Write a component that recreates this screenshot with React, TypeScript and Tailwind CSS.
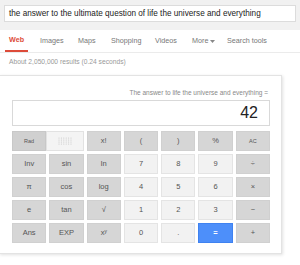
import React from 'react';

type Key = { label: string; kind: 'fn' | 'num' | 'eq'; small?: boolean };

const rows: Key[][] = [
  [
    { label: 'x!', kind: 'fn' },
    { label: '(', kind: 'fn' },
    { label: ')', kind: 'fn' },
    { label: '%', kind: 'fn' },
    { label: 'AC', kind: 'fn', small: true },
  ],
  [
    { label: 'Inv', kind: 'fn' },
    { label: 'sin', kind: 'fn' },
    { label: 'ln', kind: 'fn' },
    { label: '7', kind: 'num' },
    { label: '8', kind: 'num' },
    { label: '9', kind: 'num' },
    { label: '÷', kind: 'fn' },
  ],
  [
    { label: 'π', kind: 'fn' },
    { label: 'cos', kind: 'fn' },
    { label: 'log', kind: 'fn' },
    { label: '4', kind: 'num' },
    { label: '5', kind: 'num' },
    { label: '6', kind: 'num' },
    { label: '×', kind: 'fn' },
  ],
  [
    { label: 'e', kind: 'fn' },
    { label: 'tan', kind: 'fn' },
    { label: '√', kind: 'fn' },
    { label: '1', kind: 'num' },
    { label: '2', kind: 'num' },
    { label: '3', kind: 'num' },
    { label: '−', kind: 'fn' },
  ],
  [
    { label: 'Ans', kind: 'fn' },
    { label: 'EXP', kind: 'fn' },
    { label: 'xʸ', kind: 'fn' },
    { label: '0', kind: 'num' },
    { label: '.', kind: 'num' },
    { label: '=', kind: 'eq' },
    { label: '+', kind: 'fn' },
  ],
];

const keyStyle = {
  fn: 'bg-[#d6d6d6] border-[#d0d0d0] text-[#555]',
  num: 'bg-[#f2f2f2] border-[#e4e4e4] text-[#555]',
  eq: 'bg-[#4d8ffa] border-[#3f82f0] text-white font-bold',
};

// the little dotted grip on the Rad/Deg toggle
const Dots: React.FC = () => (
  <svg width="14" height="8" viewBox="0 0 14 8">
    {[0, 1, 2, 3].map(r =>
      [0, 1, 2, 3, 4, 5].map(c => (
        <circle key={`${r}-${c}`} cx={c * 2.4 + 1} cy={r * 2 + 1} r="0.6" fill="#c8c8c8" />
      ))
    )}
  </svg>
);

const CalcKey: React.FC<{ k: Key }> = ({ k }) => (
  <div
    className={`h-[20px] border flex items-center justify-center ${keyStyle[k.kind]} ${
      k.small ? 'text-[5.5px]' : 'text-[7.5px]'
    }`}
  >
    {k.label}
  </div>
);

const tabs = [
  { name: 'Images', w: 'w-[38px]' },
  { name: 'Maps', w: 'w-[33px]' },
  { name: 'Shopping', w: 'w-[44px]' },
  { name: 'Videos', w: 'w-[37px]' },
];

export default function App() {
  return (
    <div className="w-[300px] h-[265px] bg-white overflow-hidden font-['Liberation_Sans',Arial,sans-serif]">
      {/* search bar */}
      <div className="bg-[#f1f1f1] h-[30px] pt-[5px] px-[4px]">
        <div className="bg-white h-[17px] border border-[#dcdcdc] pl-[4px] text-[8.2px] leading-[15px] text-[#222] whitespace-nowrap">
          the answer to the ultimate question of life the universe and everything
        </div>
      </div>

      {/* tabs */}
      <div className="flex items-stretch h-[23px] border-b border-[#ebebeb] text-[7.2px] text-[#777] whitespace-nowrap">
        <div className="ml-[5px] w-[23px] px-[4px] flex items-center border-b-2 border-[#dd4b39] text-[#dd4b39] font-bold">
          Web
        </div>
        <div className="w-[12px]" />
        {tabs.map(t => (
          <div key={t.name} className={`${t.w} flex items-center`}>
            {t.name}
          </div>
        ))}
        <div className="w-[35px] flex items-center gap-[2px]">
          More
          <svg width="5" height="3" viewBox="0 0 5 3">
            <path d="M0 0h5L2.5 3z" fill="#888" />
          </svg>
        </div>
        <div className="flex items-center">Search tools</div>
      </div>

      <div className="mt-[4px] pl-[9px] h-[9px] leading-[9px] text-[6.7px] text-[#999] whitespace-nowrap">
        About 2,050,000 results (0.24 seconds)
      </div>

      {/* calculator card */}
      <div className="mt-[9px] ml-[-1px] w-[283px] border border-[#e3e3e3] shadow-[1px_1px_3px_rgba(0,0,0,0.12)] pl-[12px] pr-[11px] pt-[12px] pb-[10px]">
        <div className="text-right text-[6.5px] leading-[9px] text-[#888] pr-[2px] whitespace-nowrap">
          The answer to life the universe and everything =
        </div>
        <div className="mt-[3px] h-[26px] border border-[#d9d9d9] bg-white flex items-center justify-end pr-[11px] text-[16px] text-[#222]">
          42
        </div>
        <div className="mt-[5px] grid grid-cols-7 gap-[3px]">
          <div className="col-span-2 h-[20px] flex">
            <div className="w-[34px] bg-[#d0d0d0] border border-[#c8c8c8] flex items-center justify-center text-[5.5px] text-[#555]">
              Rad
            </div>
            <div className="flex-1 bg-[#f4f4f4] border border-[#e2e2e2] flex items-center justify-center">
              <Dots />
            </div>
          </div>
          {rows.flat().map((k, i) => (
            <CalcKey key={i} k={k} />
          ))}
        </div>
      </div>
    </div>
  );
}
